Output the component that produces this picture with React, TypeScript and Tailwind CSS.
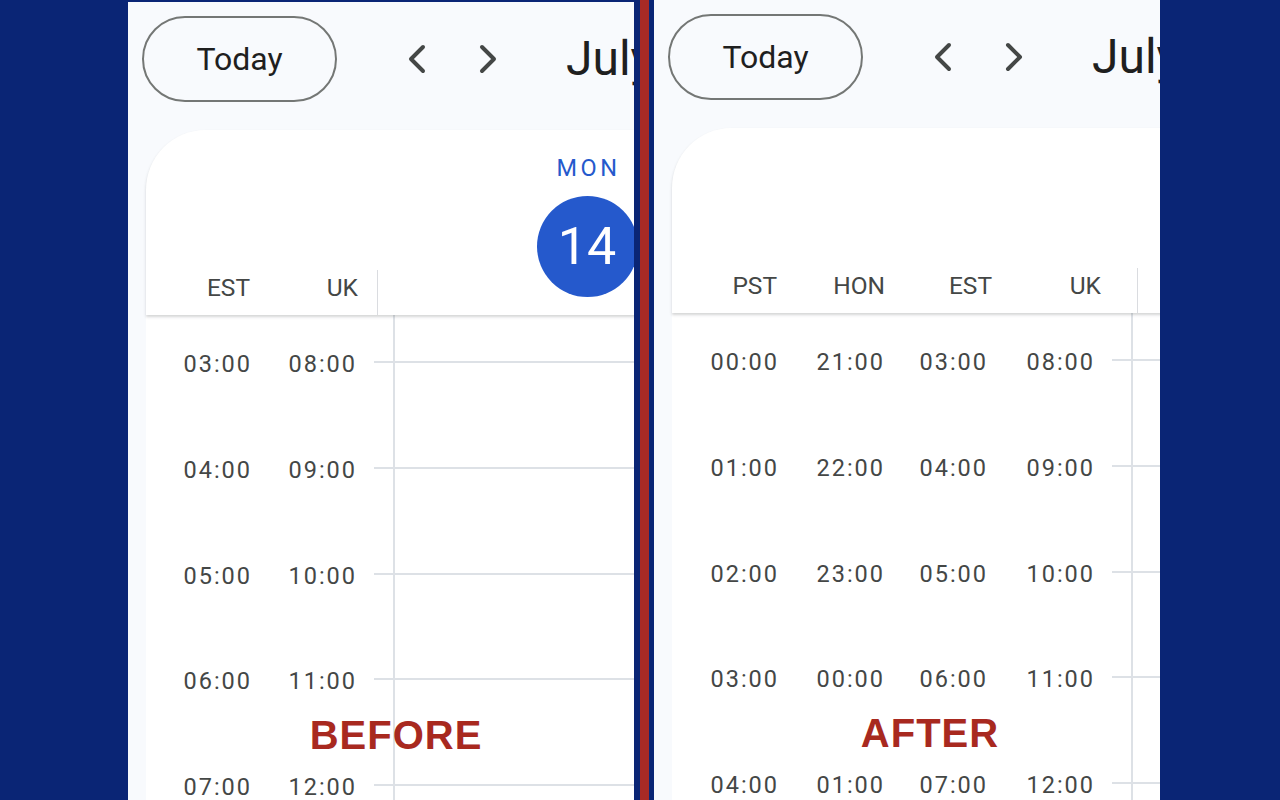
import React from 'react'
import { ChevronLeft, ChevronRight } from 'lucide-react'

interface PanelConfig {
  zones: string[]
  labelCols: string[]
  timeCols: string[]
  dividerGap: string
  rows: string[][]
  tag: string
  tagPos: string
  shift: string
}

const before: PanelConfig = {
  zones: ['EST', 'UK'],
  labelCols: ['w-[104px]', 'w-[108px]'],
  timeCols: ['w-[104px]', 'w-[105px]'],
  dividerGap: 'ml-[19px]',
  rows: [
    ['03:00', '08:00'],
    ['04:00', '09:00'],
    ['05:00', '10:00'],
    ['06:00', '11:00'],
    ['07:00', '12:00'],
  ],
  tag: 'BEFORE',
  tagPos: 'left-[268px]',
  shift: 'mt-[2px]',
}

const after: PanelConfig = {
  zones: ['PST', 'HON', 'EST', 'UK'],
  labelCols: ['w-[105px]', 'w-[108px]', 'w-[107px]', 'w-[109px]'],
  timeCols: ['w-[105px]', 'w-[106px]', 'w-[103px]', 'w-[107px]'],
  dividerGap: 'ml-[36px]',
  rows: [
    ['00:00', '21:00', '03:00', '08:00'],
    ['01:00', '22:00', '04:00', '09:00'],
    ['02:00', '23:00', '05:00', '10:00'],
    ['03:00', '00:00', '06:00', '11:00'],
    ['04:00', '01:00', '07:00', '12:00'],
  ],
  tag: 'AFTER',
  tagPos: 'left-[276px]',
  shift: '',
}

const font = 'font-[Roboto,"Liberation_Sans",sans-serif]'

const CalendarPanel: React.FC<{ cfg: PanelConfig }> = ({ cfg }) => {
  return (
    <div className={`relative w-[506px] shrink-0 h-[800px] overflow-hidden bg-[#f8fafd] ${cfg.shift} ${font}`}>
      {/* Top bar */}
      <div className="flex items-center h-[114px] whitespace-nowrap">
        <button className="ml-[14px] w-[195px] h-[86px] shrink-0 rounded-full border-2 border-[#747775] text-[32px] font-normal text-[#1f1f1f]">
          Today
        </button>
        <ChevronLeft className="ml-[56px] shrink-0 text-[#444746]" size={48} strokeWidth={2} />
        <ChevronRight className="ml-[23px] shrink-0 text-[#444746]" size={48} strokeWidth={2} />
        <span className="ml-[54px] shrink-0 text-[48px] leading-none text-[#1f1f1f]">July</span>
      </div>

      {/* Card */}
      <div className="mt-[14px] ml-[18px] w-[1000px] bg-white rounded-tl-[60px]">
        {/* Header */}
        <div className="relative z-10 flex h-[185px] bg-white rounded-tl-[60px] shadow-[0_2px_3px_rgba(60,64,67,0.22)]">
          <div className="flex shrink-0 items-end self-end h-[45px]">
            {cfg.zones.map((z, i) => (
              <div
                key={z}
                className={`${cfg.labelCols[i]} shrink-0 h-full pt-[4px] text-right text-[24.5px] leading-[28px] text-[#444746]`}
              >
                {z}
              </div>
            ))}
          </div>
          <div className={`self-end shrink-0 h-[45px] w-px bg-[#dadce0] ${cfg.dividerGap}`} />
          <div className="w-[418px] shrink-0 flex flex-col items-center pt-[24px]">
            <span className="text-[23.5px] leading-[28px] font-normal tracking-[3.5px] pl-[3px] text-[#2559cc]">MON</span>
            <div className="mt-[14px] w-[101px] h-[101px] rounded-full bg-[#2559cc] flex items-center justify-center">
              <span className="text-[52px] leading-none text-white">14</span>
            </div>
          </div>
        </div>

        {/* Body */}
        <div className="flex">
          {cfg.timeCols.map((w, c) => (
            <div key={c} className={`${w} shrink-0 pt-[35px] flex flex-col`}>
              {cfg.rows.map((r, i) => (
                <div
                  key={i}
                  className="h-[105.75px] shrink-0 text-right text-[23.5px] leading-[28px] tracking-[2px] -mr-[2px] text-[#444746]"
                >
                  {r[c]}
                </div>
              ))}
            </div>
          ))}
          <div className="ml-[19px] w-[19px] shrink-0 pt-[46px] flex flex-col">
            {cfg.rows.map((_, i) => (
              <div key={i} className="h-[105.75px] shrink-0 border-t-2 border-[#dde1e6]" />
            ))}
          </div>
          <div className="w-[500px] shrink-0 pt-[46px] border-l-2 border-[#dde1e6] flex flex-col">
            {cfg.rows.map((_, i) => (
              <div key={i} className="h-[105.75px] shrink-0 border-t-2 border-[#dde1e6]" />
            ))}
          </div>
        </div>
      </div>

      {/* Label */}
      <div
        className={`absolute top-[713px] ${cfg.tagPos} -translate-x-1/2 text-[40px] leading-none font-black tracking-[1px] text-[#a8291f] font-['Liberation_Sans',Arial,sans-serif]`}
      >
        {cfg.tag}
      </div>
    </div>
  )
}

export default function App() {
  return (
    <div className="w-[1280px] h-[800px] overflow-hidden flex bg-[#0a2575]">
      <div className="w-[128px] shrink-0" />
      <CalendarPanel cfg={before} />
      <div className="w-[6px] shrink-0" />
      <div className="w-[9px] shrink-0 bg-[#a82a25]" />
      <div className="w-[5px] shrink-0" />
      <CalendarPanel cfg={after} />
    </div>
  )
}
